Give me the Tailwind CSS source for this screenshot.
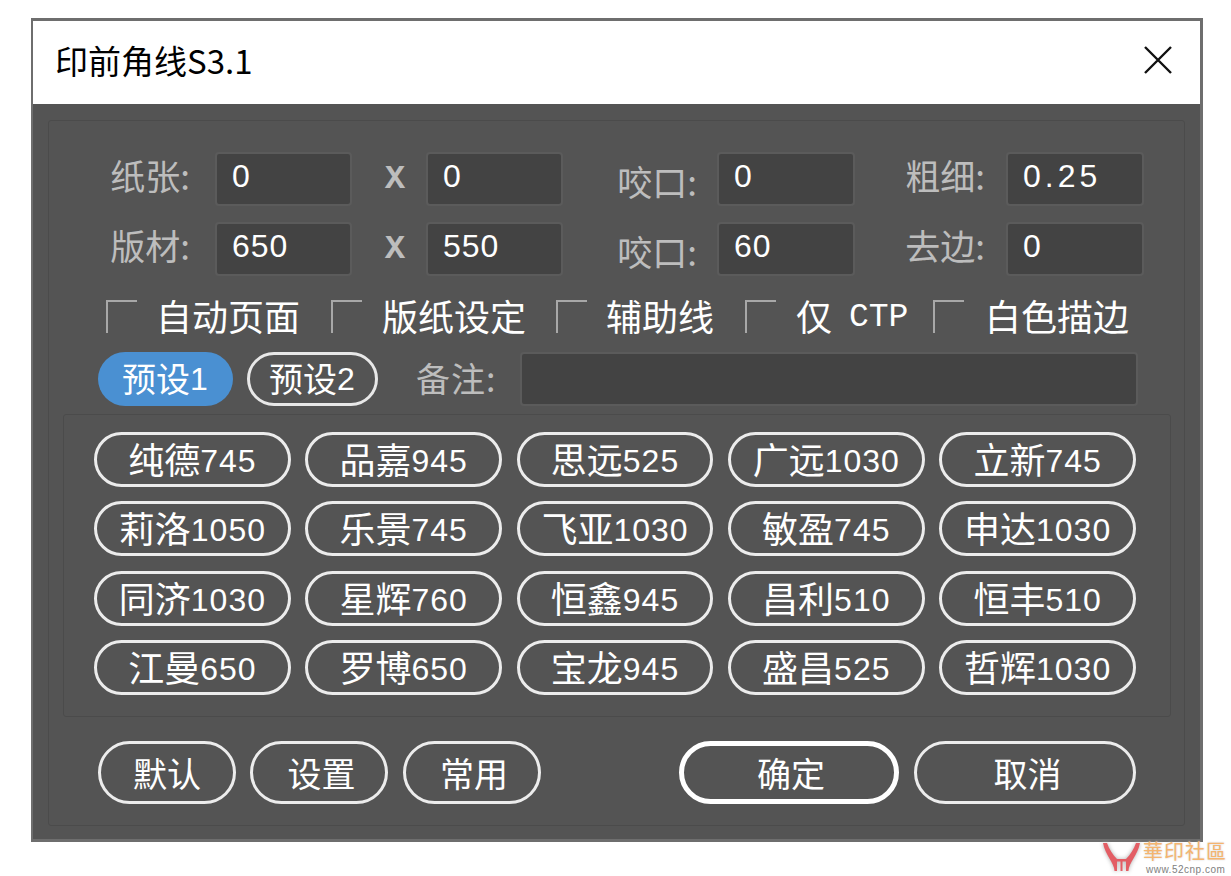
<!DOCTYPE html>
<html lang="zh-CN">
<head>
    <meta charset="UTF-8">
    <title>印前角线S3.1</title>
    <script src="https://cdn.jsdelivr.net/npm/@tailwindcss/browser@4"></script>
</head>
<body class="relative bg-white h-[876px] overflow-hidden font-['Noto_Sans_CJK_SC',sans-serif] text-white pt-[18px] pl-[31px]">
    <div class="w-[1172px] h-[824px] border-[3px] border-l-2 border-[#6e6e6e] flex flex-col bg-[#545454]">
        <!-- title bar -->
        <div class="h-[83px] shrink-0 bg-white flex items-center justify-between pl-[22px] pr-[27px] pb-[5px] text-black">
            <span class="text-[33px] leading-none">印前角线S3.1</span>
            <svg class="w-[30px] h-[30px]" viewBox="0 0 30 30" fill="none" stroke="#111" stroke-width="2.4"><path d="M2 2l26 26M28 2L2 28"/></svg>
        </div>
        <!-- main panel -->
        <div class="ml-[15px] mr-[15px] mt-[16px] h-[706px] border border-[#4b4b4b] rounded-[3px] pt-[31px]">
            <div class="grid grid-cols-[166px_137px_74px_137px_154px_138px_151px_138px] auto-rows-[54px] gap-y-[16px]">
                <div class="flex items-center justify-end pr-[25px] pb-[7px] text-[35px] text-[#bdbdbd]">纸张:</div>
                <div class="flex items-center pl-[15px] pb-[7px] bg-[#434343] border-2 border-[#5b5b5b] rounded-[4px] font-['Liberation_Sans'] text-[32px] tracking-[1px]">0</div>
                <div class="flex items-center justify-center pl-[12px] font-['Liberation_Mono'] font-bold text-[34px] text-[#bdbdbd]">X</div>
                <div class="flex items-center pl-[15px] pb-[7px] bg-[#434343] border-2 border-[#5b5b5b] rounded-[4px] font-['Liberation_Sans'] text-[32px] tracking-[1px]">0</div>
                <div class="flex items-center justify-end pr-[20px] pt-[4px] text-[35px] text-[#bdbdbd]">咬口:</div>
                <div class="flex items-center pl-[15px] pb-[7px] bg-[#434343] border-2 border-[#5b5b5b] rounded-[4px] font-['Liberation_Sans'] text-[32px] tracking-[1px]">0</div>
                <div class="flex items-center justify-end pr-[21px] pb-[7px] text-[35px] text-[#bdbdbd]">粗细:</div>
                <div class="flex items-center pl-[15px] pb-[7px] bg-[#434343] border-2 border-[#5b5b5b] rounded-[4px] font-['Liberation_Sans'] text-[32px] tracking-[4px]">0.25</div>

                <div class="flex items-center justify-end pr-[25px] pb-[7px] text-[35px] text-[#bdbdbd]">版材:</div>
                <div class="flex items-center pl-[15px] pb-[7px] bg-[#434343] border-2 border-[#5b5b5b] rounded-[4px] font-['Liberation_Sans'] text-[32px] tracking-[1px]">650</div>
                <div class="flex items-center justify-center pl-[12px] font-['Liberation_Mono'] font-bold text-[34px] text-[#bdbdbd]">X</div>
                <div class="flex items-center pl-[15px] pb-[7px] bg-[#434343] border-2 border-[#5b5b5b] rounded-[4px] font-['Liberation_Sans'] text-[32px] tracking-[1px]">550</div>
                <div class="flex items-center justify-end pr-[20px] pt-[4px] text-[35px] text-[#bdbdbd]">咬口:</div>
                <div class="flex items-center pl-[15px] pb-[7px] bg-[#434343] border-2 border-[#5b5b5b] rounded-[4px] font-['Liberation_Sans'] text-[32px] tracking-[1px]">60</div>
                <div class="flex items-center justify-end pr-[21px] pb-[7px] text-[35px] text-[#bdbdbd]">去边:</div>
                <div class="flex items-center pl-[15px] pb-[7px] bg-[#434343] border-2 border-[#5b5b5b] rounded-[4px] font-['Liberation_Sans'] text-[32px] tracking-[1px]">0</div>
            </div>

            <!-- checkboxes -->
            <div class="flex items-center h-[37px] mt-[22px] ml-[57px] text-[36px]">
                <label class="flex items-center w-[225px]"><span class="w-[31px] h-[33px] border-l-2 border-t-2 border-[#a8a8a8] mr-[19px]"></span><span class="pb-[4px]">自动页面</span></label>
                <label class="flex items-center w-[225px]"><span class="w-[31px] h-[33px] border-l-2 border-t-2 border-[#a8a8a8] mr-[20px]"></span><span class="pb-[4px]">版纸设定</span></label>
                <label class="flex items-center w-[189px]"><span class="w-[31px] h-[33px] border-l-2 border-t-2 border-[#a8a8a8] mr-[19px]"></span><span class="pb-[4px]">辅助线</span></label>
                <label class="flex items-center w-[188px]"><span class="w-[31px] h-[33px] border-l-2 border-t-2 border-[#a8a8a8] mr-[20px]"></span><span class="pb-[4px]">仅</span><span class="ml-[17px] pt-[3px] font-['Liberation_Mono'] text-[33px]">CTP</span></label>
                <label class="flex items-center"><span class="w-[31px] h-[33px] border-l-2 border-t-2 border-[#a8a8a8] mr-[21px]"></span><span class="pb-[4px]">白色描边</span></label>
            </div>

            <!-- presets + note -->
            <div class="flex items-center h-[54px] mt-[17px] ml-[49px] text-[34px] leading-[40px]">
                <button class="w-[135px] h-[54px] pb-[2px] rounded-full bg-[#4a90d2]">预设<span class="font-['Liberation_Sans'] text-[32px] tracking-[1px] align-[2px]">1</span></button>
                <button class="w-[131px] h-[54px] pb-[2px] ml-[14px] rounded-full border-[3px] border-[#e8e8e8]">预设<span class="font-['Liberation_Sans'] text-[32px] tracking-[1px] align-[2px]">2</span></button>
                <span class="ml-[38px] w-[104px] pb-[2px] tracking-[1px] text-[#bdbdbd]">备注:</span>
                <div class="w-[618px] h-[54px] bg-[#434343] border-2 border-[#5b5b5b] rounded-[4px]"></div>
            </div>

            <!-- paper presets -->
            <div class="ml-[14px] mr-[13px] mt-[8px] h-[303px] border border-[#4b4b4b] rounded-[3px] pt-[17px] pl-[30px] pr-[34px]">
                <div class="grid grid-cols-5 auto-rows-[55px] gap-x-[14.5px] gap-y-[14.3px] text-[36px] leading-[40px]">
                    <button class="rounded-full border-[3px] border-[#ececec]">纯德<span class="font-['Liberation_Sans'] text-[32px] tracking-[1px] align-[2px]">745</span></button>
                    <button class="rounded-full border-[3px] border-[#ececec]">品嘉<span class="font-['Liberation_Sans'] text-[32px] tracking-[1px] align-[2px]">945</span></button>
                    <button class="rounded-full border-[3px] border-[#ececec]">思远<span class="font-['Liberation_Sans'] text-[32px] tracking-[1px] align-[2px]">525</span></button>
                    <button class="rounded-full border-[3px] border-[#ececec]">广远<span class="font-['Liberation_Sans'] text-[32px] tracking-[1px] align-[2px]">1030</span></button>
                    <button class="rounded-full border-[3px] border-[#ececec]">立新<span class="font-['Liberation_Sans'] text-[32px] tracking-[1px] align-[2px]">745</span></button>
                    <button class="rounded-full border-[3px] border-[#ececec]">莉洛<span class="font-['Liberation_Sans'] text-[32px] tracking-[1px] align-[2px]">1050</span></button>
                    <button class="rounded-full border-[3px] border-[#ececec]">乐景<span class="font-['Liberation_Sans'] text-[32px] tracking-[1px] align-[2px]">745</span></button>
                    <button class="rounded-full border-[3px] border-[#ececec]">飞亚<span class="font-['Liberation_Sans'] text-[32px] tracking-[1px] align-[2px]">1030</span></button>
                    <button class="rounded-full border-[3px] border-[#ececec]">敏盈<span class="font-['Liberation_Sans'] text-[32px] tracking-[1px] align-[2px]">745</span></button>
                    <button class="rounded-full border-[3px] border-[#ececec]">申达<span class="font-['Liberation_Sans'] text-[32px] tracking-[1px] align-[2px]">1030</span></button>
                    <button class="rounded-full border-[3px] border-[#ececec]">同济<span class="font-['Liberation_Sans'] text-[32px] tracking-[1px] align-[2px]">1030</span></button>
                    <button class="rounded-full border-[3px] border-[#ececec]">星辉<span class="font-['Liberation_Sans'] text-[32px] tracking-[1px] align-[2px]">760</span></button>
                    <button class="rounded-full border-[3px] border-[#ececec]">恒鑫<span class="font-['Liberation_Sans'] text-[32px] tracking-[1px] align-[2px]">945</span></button>
                    <button class="rounded-full border-[3px] border-[#ececec]">昌利<span class="font-['Liberation_Sans'] text-[32px] tracking-[1px] align-[2px]">510</span></button>
                    <button class="rounded-full border-[3px] border-[#ececec]">恒丰<span class="font-['Liberation_Sans'] text-[32px] tracking-[1px] align-[2px]">510</span></button>
                    <button class="rounded-full border-[3px] border-[#ececec]">江曼<span class="font-['Liberation_Sans'] text-[32px] tracking-[1px] align-[2px]">650</span></button>
                    <button class="rounded-full border-[3px] border-[#ececec]">罗博<span class="font-['Liberation_Sans'] text-[32px] tracking-[1px] align-[2px]">650</span></button>
                    <button class="rounded-full border-[3px] border-[#ececec]">宝龙<span class="font-['Liberation_Sans'] text-[32px] tracking-[1px] align-[2px]">945</span></button>
                    <button class="rounded-full border-[3px] border-[#ececec]">盛昌<span class="font-['Liberation_Sans'] text-[32px] tracking-[1px] align-[2px]">525</span></button>
                    <button class="rounded-full border-[3px] border-[#ececec]">哲辉<span class="font-['Liberation_Sans'] text-[32px] tracking-[1px] align-[2px]">1030</span></button>
                </div>
            </div>

            <!-- bottom buttons -->
            <div class="flex h-[63px] mt-[24px] ml-[49px] text-[34px]">
                <button class="w-[138px] rounded-full border-[3px] border-[#ececec]">默认</button>
                <button class="w-[138px] ml-[14px] pl-[5px] rounded-full border-[3px] border-[#ececec]">设置</button>
                <button class="w-[138px] ml-[15px] pl-[4px] rounded-full border-[3px] border-[#ececec]">常用</button>
                <button class="w-[220px] ml-[138px] pl-[4px] rounded-full border-[5px] border-white">确定</button>
                <button class="w-[222px] ml-[15px] pl-[5px] rounded-full border-[3px] border-[#ececec]">取消</button>
            </div>
        </div>
    </div>

    <!-- forum watermark -->
    <div class="absolute left-[1102px] top-[841px] flex items-start">
        <svg class="w-[39px] h-[32px] drop-shadow-[0_0_2px_#aaa]" viewBox="0 0 39 32" fill="#e35d64">
            <path d="M1 2h4c2 6 6 12 10 16v12h-2.500c0-8-9.500-16-11.500-28z"/>
            <path d="M38 2h-4c-2 6-6 12-10 16v12h2.500c0-8 9.500-16 11.500-28z"/>
            <path d="M15 18h9v2.500h-9zM18.500 20h2v10h-2z"/>
        </svg>
        <div class="ml-[2px] w-[86px]">
            <div class="text-[20px] leading-[20px] tracking-[1px] text-[#f5b56f] [text-shadow:0_0_2px_#ccc] font-['Noto_Sans_CJK_TC',sans-serif]">華印社區</div>
            <div class="mt-[3px] ml-[3px] text-[10px] leading-[11px] tracking-[0.5px] whitespace-nowrap text-[#808080] font-['Liberation_Sans']">www.52cnp.com</div>
        </div>
    </div>
</body>
</html>
